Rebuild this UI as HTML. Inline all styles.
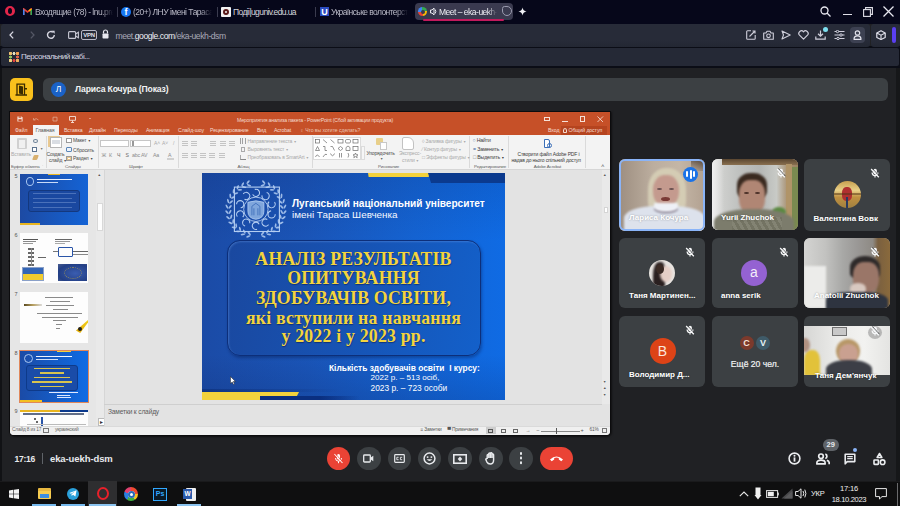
<!DOCTYPE html>
<html><head><meta charset="utf-8">
<style>
*{margin:0;padding:0;box-sizing:border-box}
html,body{width:900px;height:506px;overflow:hidden;background:#202124;font-family:"Liberation Sans",sans-serif}
.a{position:absolute}
svg{display:block}
#tabs{left:0;top:0;width:900px;height:24px;background:#06071a}
#addr{left:1px;top:24px;width:869px;height:23px;background:linear-gradient(#272b38 0 70%,#232733);border-radius:3px}
#ext{left:871px;top:24px;width:29px;height:23px;background:linear-gradient(#272b38 0 70%,#232733);border-radius:3px}
#bm{left:1px;top:48px;width:898px;height:18px;background:#252936;border-radius:2px}
#topbg{left:0;top:46px;width:900px;height:23px;background:#0b0d16}
#meet{left:0;top:68px;width:900px;height:413px;background:#202124}
#taskbar{left:0;top:481px;width:900px;height:25px;background:#0f0f10}
#ppt{left:10px;top:112px;width:600px;height:323px;background:#e6e6e6;border-radius:0 0 4px 4px;overflow:hidden;box-shadow:0 0 0 1px #0c0c0e,1px 1px 2px 1px rgba(0,0,0,0.5)}
.tt{font-size:8.5px;color:#b9b9c6;white-space:nowrap;overflow:hidden;line-height:12px;letter-spacing:-0.5px;-webkit-mask-image:linear-gradient(90deg,#000 85%,transparent)}
.pt{font-size:5.2px;line-height:8px;white-space:nowrap;color:#444;letter-spacing:-0.1px}
.rb{line-height:8px;white-space:nowrap;letter-spacing:-0.15px}
.ttl{left:0;width:303px;text-align:center;font-family:"Liberation Serif",serif;font-weight:bold;font-size:17.8px;line-height:20px;letter-spacing:0.2px;color:#f3d43e;white-space:nowrap;text-shadow:0.5px 0.5px 1px rgba(0,0,40,0.4)}
.nm{font-size:8px;font-weight:bold;line-height:12px;color:#fff;white-space:nowrap;text-shadow:0 0 2px rgba(0,0,0,0.35)}
.vid{filter:blur(1.2px)}
.tile{position:absolute;background:#3c4043;border-radius:6px;overflow:hidden}
</style></head><body>

<!-- TAB BAR -->
<div class="a" id="tabs">
 <div class="a" style="left:4.5px;top:5.8px;width:10.5px;height:10.5px;border-style:solid;border-color:#e3264a;border-width:2px 3px;border-radius:50%"></div>
 <div class="a" style="left:23px;top:8px;width:9px;height:7px">
  <svg width="9" height="7" viewBox="0 0 9 7"><path d="M0.7 7V1L4.5 4L8.3 1V7" fill="none" stroke="#ea4335" stroke-width="1.6"/><path d="M0.7 7V1.5" stroke="#4285f4" stroke-width="1.6"/><path d="M8.3 7V1.5" stroke="#34a853" stroke-width="1.6"/><path d="M6 3L8.3 1" stroke="#fbbc04" stroke-width="1.6"/></svg>
 </div>
 <div class="a tt" style="left:35px;top:6px;width:78px">Входящие (78) - lnu.pres</div>
 <div class="a" style="left:117px;top:7px;width:1px;height:10px;background:#3a3b4e"></div>
 <div class="a" style="left:121px;top:7px;width:10px;height:10px;border-radius:50%;background:#1877f2;color:#fff;font-size:9px;font-weight:bold;line-height:11px;text-align:center;overflow:hidden">f</div>
 <div class="a tt" style="left:133px;top:6px;width:79px">(20+) ЛНУ імені Тараса |</div>
 <div class="a" style="left:217px;top:7px;width:1px;height:10px;background:#3a3b4e"></div>
 <div class="a" style="left:221px;top:7px;width:10px;height:10px;background:#f2f2f2;border-radius:1px"><div class="a" style="left:2px;top:2px;width:6px;height:6px;border:2px solid #5a1a1a;border-radius:50%"></div></div>
 <div class="a tt" style="left:233px;top:6px;width:66px;color:#d6d6de;-webkit-mask-image:none;letter-spacing:-0.6px">Подіі|uguniv.edu.ua</div>
 <div class="a" style="left:315px;top:7px;width:1px;height:10px;background:#3a3b4e"></div>
 <div class="a" style="left:320px;top:7px;width:9px;height:9px;background:#2b4cc0;color:#fff;font-size:9px;font-weight:bold;line-height:10px;text-align:center">U</div>
 <div class="a tt" style="left:331px;top:6px;width:77px;letter-spacing:-0.6px">Українське волонтерсто</div>
 <div class="a" style="left:415px;top:3px;width:98px;height:17px;background:#3a3a4f;border-radius:4px"></div>
 <div class="a" style="left:418px;top:7px;width:9px;height:9px;border-radius:50%;background:conic-gradient(#34a853 0 25%,#fbbc04 0 50%,#ea4335 0 75%,#4285f4 0)"><div class="a" style="left:2.5px;top:2.5px;width:4px;height:4px;border-radius:50%;background:#3a3a4f"></div></div>
 <div class="a" style="left:430px;top:7px;width:7px;height:9px"><svg width="7" height="9" viewBox="0 0 7 9"><path d="M0.5 3H2L4 1V8L2 6H0.5Z" fill="none" stroke="#e8e8ef" stroke-width="1"/><path d="M5.2 2.5Q6.5 4.5 5.2 6.5" fill="none" stroke="#e8e8ef" stroke-width="1"/></svg></div>
 <div class="a tt" style="left:439px;top:6px;width:58px;color:#eeeef4">Meet – eka-uekh-</div>
 <div class="a" style="left:502px;top:6px;width:10px;height:10px;border:1.2px solid #9a9aae;border-radius:3px 6px 6px 6px"></div>
 <div class="a" style="left:423px;top:19px;width:81px;height:2px;background:#c21a5c;border-radius:1px"></div>
 <div class="a" style="left:518px;top:7px;width:9px;height:9px"><svg width="9" height="9" viewBox="0 0 9 9"><path d="M4.5 0.5Q5 4 8.5 4.5Q5 5 4.5 8.5Q4 5 0.5 4.5Q4 4 4.5 0.5Z" fill="#f0f0f5"/></svg></div>
 <div class="a" style="left:820px;top:6px;width:11px;height:11px"><svg width="11" height="11" viewBox="0 0 11 11"><circle cx="4.5" cy="4.5" r="3.5" fill="none" stroke="#e8e8f0" stroke-width="1.3"/><path d="M7 7L10.5 10.5" stroke="#e8e8f0" stroke-width="1.3"/></svg></div>
 <div class="a" style="left:843px;top:14px;width:9px;height:1px;background:#e0e0e8"></div>
 <div class="a" style="left:863px;top:7px;width:10px;height:10px"><svg width="10" height="10" viewBox="0 0 10 10"><rect x="0.6" y="2.6" width="6.8" height="6.8" fill="none" stroke="#e0e0e8" stroke-width="1.1"/><path d="M2.6 2.6V0.6H9.4V7.4H7.4" fill="none" stroke="#e0e0e8" stroke-width="1.1"/></svg></div>
 <div class="a" style="left:883px;top:6px;width:11px;height:11px"><svg width="11" height="11" viewBox="0 0 11 11"><path d="M0.5 0.5L10.5 10.5M10.5 0.5L0.5 10.5" stroke="#e8e8f0" stroke-width="1.3"/></svg></div>
</div>

<div class="a" id="topbg"></div>
<div class="a" id="addr">
 <div class="a" style="left:8px;top:7px"><svg width="5" height="8" viewBox="0 0 5 8"><path d="M4.2 0.6L1 4L4.2 7.4" fill="none" stroke="#d8d8e2" stroke-width="1.3"/></svg></div>
 <div class="a" style="left:29px;top:7px"><svg width="5" height="8" viewBox="0 0 5 8"><path d="M0.8 0.6L4 4L0.8 7.4" fill="none" stroke="#555866" stroke-width="1.3"/></svg></div>
 <div class="a" style="left:45px;top:6px"><svg width="10" height="10" viewBox="0 0 10 10"><path d="M8.3 5A3.4 3.4 0 1 1 7 2.2" fill="none" stroke="#d8d8e2" stroke-width="1.4"/><path d="M5.6 0.8H8.6V3.8Z" fill="#d8d8e2"/></svg></div>
 <div class="a" style="left:67px;top:7px"><svg width="11" height="8" viewBox="0 0 11 8"><rect x="0.6" y="0.6" width="7" height="6.8" rx="1" fill="none" stroke="#c8c8d4" stroke-width="1.1"/><path d="M7.6 3L10.4 1.2V6.8L7.6 5" fill="none" stroke="#c8c8d4" stroke-width="1.1"/></svg></div>
 <div class="a" style="left:80px;top:6px;width:16px;height:10px;border:1.2px solid #b8b8c6;border-radius:2px;font-size:6px;font-weight:bold;color:#e0e0ea;line-height:8px;text-align:center;letter-spacing:-0.2px">VPN</div>
 <div class="a" style="left:101px;top:5px"><svg width="7" height="10" viewBox="0 0 7 10"><path d="M1.5 4.5V3A2 2 0 0 1 5.5 3V4.5" fill="none" stroke="#e8e8f0" stroke-width="1.2"/><rect x="0.5" y="4.5" width="6" height="5" rx="0.8" fill="#e8e8f0"/></svg></div>
 <div class="a" style="left:114.5px;top:5.8px;font-size:8.6px;line-height:12px;color:#a8a8b6;letter-spacing:-0.45px;white-space:nowrap">meet.<span style="color:#eeeef5">google.com</span>/eka-uekh-dsm</div>

 <div class="a" style="left:745px;top:6px"><svg width="10" height="10" viewBox="0 0 10 10"><path d="M5 0.8H1.5A0.8 0.8 0 0 0 0.7 1.6V8.5A0.8 0.8 0 0 0 1.5 9.3H8.4A0.8 0.8 0 0 0 9.2 8.5V5" fill="none" stroke="#cfcfdb" stroke-width="1.1"/><path d="M3.5 6.5L9 1M6.5 1H9V3.5" fill="none" stroke="#cfcfdb" stroke-width="1.1"/></svg></div>
 <div class="a" style="left:762px;top:6px"><svg width="11" height="10" viewBox="0 0 11 10"><path d="M0.7 3H3L4 1.2H7L8 3H10.3V9.2H0.7Z" fill="none" stroke="#cfcfdb" stroke-width="1.1" stroke-linejoin="round"/><circle cx="5.5" cy="5.8" r="1.8" fill="none" stroke="#cfcfdb" stroke-width="1.1"/></svg></div>
 <div class="a" style="left:780px;top:6px"><svg width="10" height="10" viewBox="0 0 10 10"><path d="M1 1L9.2 5L1 9L2.5 5Z" fill="none" stroke="#cfcfdb" stroke-width="1.1" stroke-linejoin="round"/></svg></div>
 <div class="a" style="left:797px;top:6px"><svg width="11" height="10" viewBox="0 0 11 10"><path d="M5.5 9.2L1.5 5.2A2.4 2.4 0 0 1 5.5 1.8A2.4 2.4 0 0 1 9.5 5.2Z" fill="none" stroke="#cfcfdb" stroke-width="1.2" stroke-linejoin="round"/></svg></div>
 <div class="a" style="left:814px;top:6px"><svg width="11" height="10" viewBox="0 0 11 10"><path d="M5.5 0.5V6M3 3.8L5.5 6.2L8 3.8M0.8 6.5V9.2H10.2V6.5" fill="none" stroke="#cfcfdb" stroke-width="1.2"/></svg></div>
 <div class="a" style="left:822px;top:3px;width:5px;height:5px;border-radius:50%;background:#7ee0f0"></div>
 <div class="a" style="left:833px;top:6px"><svg width="11" height="10" viewBox="0 0 11 10"><path d="M0.5 1.5H10.5M0.5 5H10.5M0.5 8.5H10.5" stroke="#cfcfdb" stroke-width="1.1"/><circle cx="3.5" cy="1.5" r="1.2" fill="#262a37" stroke="#cfcfdb" stroke-width="1"/><circle cx="7" cy="5" r="1.2" fill="#262a37" stroke="#cfcfdb" stroke-width="1"/><circle cx="4" cy="8.5" r="1.2" fill="#262a37" stroke="#cfcfdb" stroke-width="1"/></svg></div>
 <div class="a" style="left:849px;top:3px;width:15px;height:16px;border-radius:4px;background:#3d4152"></div>
 <div class="a" style="left:852px;top:6px"><svg width="9" height="10" viewBox="0 0 9 10"><circle cx="4.5" cy="3" r="2.2" fill="none" stroke="#e4e4ee" stroke-width="1.2"/><path d="M1 9.3Q1 5.8 4.5 5.8Q8 5.8 8 9.3Z" fill="none" stroke="#e4e4ee" stroke-width="1.2" stroke-linejoin="round"/></svg></div>
</div>
<div class="a" id="ext">
 <div class="a" style="left:5px;top:6px"><svg width="10" height="10" viewBox="0 0 10 10"><path d="M5 0.7L9.2 3V7.5L5 9.5L0.8 7.5V3Z" fill="none" stroke="#e0e0ea" stroke-width="1.2" stroke-linejoin="round"/><path d="M0.8 3L5 5.2L9.2 3M5 5.2V9.5" fill="none" stroke="#e0e0ea" stroke-width="1.1"/></svg></div>
 <div class="a" style="left:21px;top:3px;width:4px;height:16px;border-radius:2px;background:#5a3ff0"></div>
</div>
<div class="a" id="bm">
 <div class="a" style="left:8px;top:4px;width:10px;height:10px;background:
   radial-gradient(circle at 1.5px 1.5px,#f0c070 1.4px,transparent 1.6px),
   radial-gradient(circle at 5px 1.5px,#e0e0c0 1.4px,transparent 1.6px),
   radial-gradient(circle at 8.5px 1.5px,#f5a050 1.4px,transparent 1.6px),
   radial-gradient(circle at 1.5px 5px,#90c060 1.4px,transparent 1.6px),
   radial-gradient(circle at 8.5px 5px,#e06050 1.4px,transparent 1.6px),
   radial-gradient(circle at 1.5px 8.5px,#f0d080 1.4px,transparent 1.6px),
   radial-gradient(circle at 5px 8.5px,#e04040 1.4px,transparent 1.6px),
   radial-gradient(circle at 8.5px 8.5px,#f0b060 1.4px,transparent 1.6px)"></div>
 <div class="a" style="left:20px;top:3px;font-size:8px;line-height:11px;color:#d8d8e2;letter-spacing:-0.45px;white-space:nowrap">Персональний кабі...</div>
</div>
<div class="a" id="meet">
 <div class="a" style="left:0;top:0;width:2px;height:413px;background:#111215"></div>
 <div class="a" style="left:896px;top:0;width:4px;height:413px;background:#161719"></div>
 <div class="a" style="left:10px;top:10px;width:23px;height:23px;border-radius:5px;background:#f9c01c"></div>
 <div class="a" style="left:15px;top:15px"><svg width="13" height="13" viewBox="0 0 13 13"><path d="M2 12V1.2H9.5V12M0.5 12H12" fill="none" stroke="#3a2a00" stroke-width="1.3"/><path d="M4 2.5L8 3.5V11.5L4 10.5Z" fill="#3a2a00"/><rect x="10" y="5" width="2" height="1.5" fill="#3a2a00"/></svg></div>
 <div class="a" style="left:43px;top:10px;width:845px;height:23px;border-radius:6px;background:#3c4043"></div>
 <div class="a" style="left:51px;top:14px;width:15px;height:15px;border-radius:50%;background:#1a62c7;color:#fff;font-size:8.5px;line-height:15px;text-align:center">Л</div>
 <div class="a" style="left:75px;top:15px;font-size:8.6px;line-height:13px;color:#f1f3f4;font-weight:bold;white-space:nowrap;letter-spacing:-0.15px">Лариса Кочура (Показ)</div>
</div>
<div class="a" id="ppt">
 <div class="a" style="left:0;top:0;width:600px;height:23px;background:#c65028"></div>
 <!-- quick access -->
 <div class="a" style="left:6.5px;top:4px"><svg width="6" height="6" viewBox="0 0 6 6"><path d="M0.4 0.4H4.6L5.6 1.4V5.6H0.4Z" fill="#f6e1d8"/><rect x="1.4" y="3.2" width="3.2" height="2" fill="#c65028"/><rect x="1.6" y="0.4" width="2.6" height="1.3" fill="#c65028"/></svg></div>
 <div class="a" style="left:23px;top:4.5px"><svg width="6" height="5" viewBox="0 0 6 5"><path d="M1.2 2.5Q3 0.5 5.5 3" fill="none" stroke="#e0a890" stroke-width="0.8"/><path d="M0.4 1V3H2.4" fill="none" stroke="#e0a890" stroke-width="0.8"/></svg></div>
 <div class="a" style="left:42px;top:4px"><svg width="6" height="6" viewBox="0 0 6 6"><path d="M1 1.2H5V5H1Z" fill="none" stroke="#e0a890" stroke-width="0.8"/></svg></div>
 <div class="a" style="left:59px;top:3.5px"><svg width="7" height="7" viewBox="0 0 7 7"><path d="M0.5 0.5H6.5V4.3H0.5Z" fill="none" stroke="#f6e1d8" stroke-width="0.9"/><path d="M3.5 4.3V6.5M2 6.5H5" stroke="#f6e1d8" stroke-width="0.9"/></svg></div>
 <div class="a" style="left:79px;top:6px;width:0;height:0;border-left:1.5px solid transparent;border-right:1.5px solid transparent;border-top:1.8px solid #f6e1d8"></div>
 <div class="a pt" style="left:227px;top:3.5px;font-size:5.2px;letter-spacing:-0.2px;color:#f3d8cc">Мероприятия анализа пакета - PowerPoint (Сбой активации продукта)</div>
 <div class="a" style="left:534px;top:4.5px;width:6px;height:4.5px;border:0.8px solid #f6e1d8;border-top-width:1.5px"></div>
 <div class="a" style="left:552px;top:8.5px;width:6px;height:0.8px;background:#f6e1d8"></div>
 <div class="a" style="left:569.5px;top:4px;width:5.5px;height:5.5px;border:0.8px solid #f6e1d8"></div>
 <div class="a" style="left:587px;top:3.5px"><svg width="6.5" height="6.5" viewBox="0 0 7 7"><path d="M0.5 0.5L6.5 6.5M6.5 0.5L0.5 6.5" stroke="#f6e1d8" stroke-width="0.9"/></svg></div>
 <!-- tabs -->
 <div class="a" style="left:23px;top:13px;width:26px;height:10px;background:#f3f3f3"></div>
 <div class="a pt" style="left:5px;top:14px;color:#f6ddd2">Файл</div>
 <div class="a pt" style="left:25.5px;top:14px;color:#555">Главная</div>
 <div class="a pt" style="left:54px;top:14px;color:#f6ddd2">Вставка</div>
 <div class="a pt" style="left:79px;top:14px;color:#f6ddd2">Дизайн</div>
 <div class="a pt" style="left:104px;top:14px;color:#f6ddd2">Переходы</div>
 <div class="a pt" style="left:136px;top:14px;color:#f6ddd2">Анимация</div>
 <div class="a pt" style="left:168px;top:14px;color:#f6ddd2">Слайд-шоу</div>
 <div class="a pt" style="left:200px;top:14px;color:#f6ddd2">Рецензирование</div>
 <div class="a pt" style="left:247px;top:14px;color:#f6ddd2">Вид</div>
 <div class="a pt" style="left:264px;top:14px;color:#f6ddd2">Acrobat</div>
 <div class="a pt" style="left:290px;top:14px;color:#ecc4b2">♀ Что вы хотите сделать?</div>
 <div class="a pt" style="left:538px;top:14px;color:#f6ddd2">Вход</div>
 <div class="a" style="left:551px;top:14px;width:46px;height:9px;background:#b5441f"></div>
 <div class="a pt" style="left:553px;top:14px;color:#f6ddd2"><span style="display:inline-block;width:4px;height:5px;border:0.7px solid #f6ddd2;border-radius:50% 50% 1px 1px;vertical-align:-0.5px;margin-right:1.5px"></span>Общий доступ</div>
 <!-- ribbon -->
 <div class="a" style="left:0;top:23px;width:600px;height:35px;background:#f3f3f3;border-bottom:1px solid #d6d6d6"></div>
 <div class="a" style="left:35.5px;top:24.0px;width:0.8px;height:32.0px;background:#dadada;"></div>
<div class="a" style="left:87.8px;top:24.0px;width:0.8px;height:32.0px;background:#dadada;"></div>
<div class="a" style="left:167.8px;top:24.0px;width:0.8px;height:32.0px;background:#dadada;"></div>
<div class="a" style="left:301.7px;top:24.0px;width:0.8px;height:32.0px;background:#dadada;"></div>
<div class="a" style="left:459.3px;top:24.0px;width:0.8px;height:32.0px;background:#dadada;"></div>
<div class="a" style="left:498.0px;top:24.0px;width:0.8px;height:32.0px;background:#dadada;"></div>
<div class="a" style="left:574.9px;top:24.0px;width:0.8px;height:32.0px;background:#dadada;"></div>
<div class="a rb" style="left:1.0px;top:51.0px;color:#5f5f5f;font-size:4.4px;letter-spacing:-0.1px;">Буфер обмена</div>
<div class="a rb" style="left:55.0px;top:51.0px;color:#5f5f5f;font-size:4.4px;letter-spacing:-0.1px;">Слайды</div>
<div class="a rb" style="left:119.0px;top:51.0px;color:#5f5f5f;font-size:4.4px;letter-spacing:-0.1px;">Шрифт</div>
<div class="a rb" style="left:227.5px;top:51.0px;color:#5f5f5f;font-size:4.4px;letter-spacing:-0.1px;">Абзац</div>
<div class="a rb" style="left:368.0px;top:51.0px;color:#5f5f5f;font-size:4.4px;letter-spacing:-0.1px;">Рисование</div>
<div class="a rb" style="left:464.0px;top:51.0px;color:#5f5f5f;font-size:4.4px;letter-spacing:-0.1px;">Редактирование</div>
<div class="a rb" style="left:523.7px;top:51.0px;color:#5f5f5f;font-size:4.4px;letter-spacing:-0.1px;">Adobe Acrobat</div>
<div class="a" style="left:7.0px;top:25.5px;width:10.0px;height:11.5px;background:#d0d0d0;border-radius:1px"></div>
<div class="a" style="left:9.0px;top:28.0px;width:6.0px;height:8.0px;background:#f0f0f0;"></div>
<div class="a rb" style="left:1.0px;top:37.7px;color:#a9a9a9;font-size:5px;">Вставить</div>
<div class="a" style="left:23.0px;top:27.0px;width:5.0px;height:4.0px;background:transparent;border:1px solid #6a7f95;border-radius:50%"></div>
<div class="a" style="left:22.0px;top:35.0px;width:5.0px;height:5.0px;background:#fff;border:1px solid #5f7590"></div>
<div class="a rb" style="left:30.0px;top:33.0px;color:#777;font-size:4px;"><span style="font-size:3.3px;vertical-align:middle">▼</span></div>
<div class="a" style="left:23.0px;top:43.0px;width:5.0px;height:5.0px;background:#d8b070;transform:skew(-20deg);border-radius:1px"></div>
<div class="a rb" style="left:32.0px;top:50.0px;color:#777;font-size:4px;">·</div>
<div class="a" style="left:40.0px;top:24.5px;width:12.0px;height:11.0px;background:#fff;border:1px solid #b5b5b5;box-shadow:-2px -1px 0 #e8c890"></div>
<div class="a" style="left:42.0px;top:28.0px;width:8.0px;height:4.0px;background:#d9dde3;"></div>
<div class="a rb" style="left:36.5px;top:37.7px;color:#4a4a4a;font-size:5px;">Создать</div>
<div class="a rb" style="left:39.0px;top:43.8px;color:#4a4a4a;font-size:5px;">слайд <span style="font-size:3.3px;vertical-align:middle">▼</span></div>
<div class="a" style="left:56.0px;top:25.5px;width:6.0px;height:5.5px;background:#fff;border:1px solid #9a9a9a"></div>
<div class="a rb" style="left:63.0px;top:24.3px;color:#4a4a4a;font-size:5px;">Макет <span style="font-size:3.3px;vertical-align:middle">▼</span></div>
<div class="a" style="left:56.0px;top:34.5px;width:6.0px;height:5.5px;background:#eef3f9;border:1px solid #5a86b8;border-radius:1px"></div>
<div class="a rb" style="left:63.0px;top:33.5px;color:#4a4a4a;font-size:5px;">Сбросить</div>
<div class="a" style="left:56.0px;top:43.5px;width:6.0px;height:5.5px;background:#fff;border:1px solid #9a9a9a;box-shadow:inset 0 0 0 1px #e8c890"></div>
<div class="a rb" style="left:63.0px;top:42.0px;color:#4a4a4a;font-size:5px;">Раздел <span style="font-size:3.3px;vertical-align:middle">▼</span></div>
<div class="a" style="left:90.0px;top:27.5px;width:29.0px;height:7.5px;background:#fff;border:1px solid #c6c6c6"></div>
<div class="a" style="left:120.0px;top:27.5px;width:21.0px;height:7.5px;background:#fff;border:1px solid #c6c6c6"></div>
<div class="a" style="left:122.0px;top:28.5px;width:2.0px;height:5.5px;background:#fff;border-left:1px solid #999;border-right:1px solid #999"></div>
<div class="a rb" style="left:144.0px;top:27.3px;color:#a9a9a9;font-size:5px;">A˄</div>
<div class="a rb" style="left:152.0px;top:27.3px;color:#a9a9a9;font-size:5px;">A˅</div>
<div class="a rb" style="left:163.0px;top:27.3px;color:#a9a9a9;font-size:5px;">/</div>
<div class="a rb" style="left:91.5px;top:39.3px;color:#8a8a8a;font-size:5.2px;">Ж</div>
<div class="a rb" style="left:99.0px;top:39.3px;color:#8a8a8a;font-size:5.2px;">К</div>
<div class="a rb" style="left:107.0px;top:39.3px;color:#6a6a6a;font-size:5.2px;">Ч</div>
<div class="a rb" style="left:115.5px;top:39.3px;color:#6a6a6a;font-size:5.2px;">S</div>
<div class="a rb" style="left:122.0px;top:39.3px;color:#8a8a8a;font-size:5.2px;">abc</div>
<div class="a rb" style="left:131.0px;top:39.3px;color:#8a8a8a;font-size:5.2px;">AV</div>
<div class="a rb" style="left:143.0px;top:39.3px;color:#8a8a8a;font-size:5.2px;">Aa</div>
<div class="a rb" style="left:158.0px;top:39.3px;color:#8a8a8a;font-size:5.2px;">A</div>
<div class="a" style="left:157.0px;top:46.0px;width:7.0px;height:1.5px;background:#d0d0d0;"></div>
<div class="a" style="left:172.0px;top:28.5px;width:6.0px;height:5.5px;background:repeating-linear-gradient(#c4c4c4 0 1px,transparent 1px 2.2px);"></div>
<div class="a" style="left:181.0px;top:28.5px;width:6.0px;height:5.5px;background:repeating-linear-gradient(#c4c4c4 0 1px,transparent 1px 2.2px);"></div>
<div class="a" style="left:200.0px;top:28.5px;width:6.0px;height:5.5px;background:repeating-linear-gradient(#c4c4c4 0 1px,transparent 1px 2.2px);"></div>
<div class="a" style="left:209.5px;top:28.5px;width:6.0px;height:5.5px;background:repeating-linear-gradient(#c4c4c4 0 1px,transparent 1px 2.2px);"></div>
<div class="a" style="left:219.0px;top:28.5px;width:6.0px;height:5.5px;background:repeating-linear-gradient(#c4c4c4 0 1px,transparent 1px 2.2px);"></div>
<div class="a" style="left:172.0px;top:40.5px;width:6.0px;height:5.5px;background:repeating-linear-gradient(#c4c4c4 0 1px,transparent 1px 2.2px);"></div>
<div class="a" style="left:181.0px;top:40.5px;width:6.0px;height:5.5px;background:repeating-linear-gradient(#c4c4c4 0 1px,transparent 1px 2.2px);"></div>
<div class="a" style="left:190.0px;top:40.5px;width:6.0px;height:5.5px;background:repeating-linear-gradient(#c4c4c4 0 1px,transparent 1px 2.2px);"></div>
<div class="a" style="left:199.0px;top:40.5px;width:6.0px;height:5.5px;background:repeating-linear-gradient(#c4c4c4 0 1px,transparent 1px 2.2px);"></div>
<div class="a" style="left:209.0px;top:40.5px;width:6.0px;height:5.5px;background:repeating-linear-gradient(#c4c4c4 0 1px,transparent 1px 2.2px);"></div>
<div class="a" style="left:230.0px;top:25.5px;width:6.0px;height:6.0px;background:repeating-linear-gradient(90deg,#a0a0a0 0 1px,transparent 1px 2.5px);"></div>
<div class="a rb" style="left:237.5px;top:24.7px;color:#a9a9a9;font-size:5px;">Направление текста <span style="font-size:3.3px;vertical-align:middle">▼</span></div>
<div class="a" style="left:231.0px;top:34.5px;width:4.0px;height:5.5px;background:transparent;border:1px solid #aaa"></div>
<div class="a rb" style="left:237.5px;top:33.3px;color:#a9a9a9;font-size:5px;">Выровнять текст <span style="font-size:3.3px;vertical-align:middle">▼</span></div>
<div class="a" style="left:230.0px;top:42.5px;width:6.0px;height:5.5px;background:transparent;border-bottom:1px solid #888;border-left:1px solid #aaa"></div>
<div class="a rb" style="left:237.5px;top:41.3px;color:#a9a9a9;font-size:5px;">Преобразовать в SmartArt <span style="font-size:3.3px;vertical-align:middle">▼</span></div>
<div class="a" style="left:303.0px;top:25.0px;width:48.0px;height:23.0px;background:#fff;border:1px solid #dcdcdc"></div>
<svg class="a" style="left:304px;top:26px" width="46" height="21" viewBox="0 0 46 21" fill="none" stroke="#6a6a6a" stroke-width="0.7"><rect x="1.5" y="1.5" width="4" height="3.5"/><path d="M9 1.5L13 5M16.5 1.5L20.5 5"/><rect x="24" y="1.5" width="5" height="3.5"/><rect x="31.5" y="1.5" width="5" height="3.5" rx="1.2"/><rect x="39" y="1.5" width="5" height="3.5"/><path d="M1.5 12.5L3.5 8.5L5.5 12.5Z"/><path d="M9 8.5H11V12.5H13M16.5 8.5H18.5L20.5 12.5"/><path d="M24 10.5L26.5 8.5L29 10.5L26.5 12.5Z"/><path d="M32 12.5V9.5L34 8L36 9.5V12.5Z"/><rect x="39" y="8.5" width="5" height="4"/><path d="M1.5 19Q3 15 5.5 19M9 19Q11 15 13 16.5M16.5 15.5Q18.5 20 20.5 15.5M25.5 15V19.5M27.5 15V19.5M34 15Q35.5 17 34 19.5"/><path d="M41.5 15L42.3 16.8H44L42.7 17.9L43.2 19.7L41.5 18.6L39.8 19.7L40.3 17.9L39 16.8H40.7Z"/></svg>
<div class="a" style="left:351.0px;top:34.0px;width:4.0px;height:14.0px;background:#f6f6f6;border:1px solid #dcdcdc"></div>
<div class="a" style="left:366.0px;top:25.5px;width:7.0px;height:7.5px;background:#e8cf8a;border-radius:1px"></div>
<div class="a" style="left:370.0px;top:30.0px;width:7.0px;height:7.5px;background:#fff;border:1px solid #c8c8c8"></div>
<div class="a rb" style="left:356.5px;top:37.3px;color:#4a4a4a;font-size:5px;">Упорядочить</div>
<div class="a rb" style="left:370.0px;top:43.3px;color:#666;font-size:4px;"><span style="font-size:3.3px;vertical-align:middle">▼</span></div>
<div class="a" style="left:392.0px;top:25.0px;width:12.0px;height:13.0px;background:#fff;border:1px solid #c2c2c2;border-radius:2px 6px 2px 2px"></div>
<div class="a rb" style="left:389.0px;top:37.3px;color:#a9a9a9;font-size:5px;">Экспресс-</div>
<div class="a rb" style="left:392.0px;top:43.8px;color:#a9a9a9;font-size:5px;">стили <span style="font-size:3.3px;vertical-align:middle">▼</span></div>
<div class="a rb" style="left:412.0px;top:24.7px;color:#a9a9a9;font-size:5px;">◊ Заливка фигуры <span style="font-size:3.3px;vertical-align:middle">▼</span></div>
<div class="a rb" style="left:412.0px;top:32.7px;color:#a9a9a9;font-size:5px;">⁄ Контур фигуры <span style="font-size:3.3px;vertical-align:middle">▼</span></div>
<div class="a rb" style="left:412.0px;top:41.3px;color:#a9a9a9;font-size:5px;">□ Эффекты фигуры <span style="font-size:3.3px;vertical-align:middle">▼</span></div>
<div class="a rb" style="left:462.5px;top:24.3px;color:#3c3c3c;font-size:5.2px;"><b style="color:#2a5a9a">○</b> Найти</div>
<div class="a rb" style="left:463.0px;top:32.7px;color:#3c3c3c;font-size:5.2px;"><span style="color:#2a5a9a">=</span> Заменить <span style="font-size:3.3px;vertical-align:middle">▼</span></div>
<div class="a rb" style="left:463.0px;top:40.7px;color:#3c3c3c;font-size:5.2px;"><span style="color:#777">□</span> Выделить <span style="font-size:3.3px;vertical-align:middle">▼</span></div>
<div class="a" style="left:534.0px;top:27.0px;width:6.0px;height:9.0px;background:#fff;border:1px solid #3b6fb8;border-radius:0 2px 0 0"></div>
<div class="a" style="left:537.0px;top:31.0px;width:5.0px;height:5.0px;background:transparent;border:1px solid #3b6fb8;border-radius:50%"></div>
<div class="a rb" style="left:507.5px;top:37.6px;color:#3a3a3a;font-size:5px;">Створити файл Adobe PDF і</div>
<div class="a rb" style="left:501.5px;top:43.8px;color:#3a3a3a;font-size:5px;">надав до нього спільний доступ</div>
<div class="a rb" style="left:591.0px;top:49.8px;color:#555;font-size:6px;">˄</div>
 <!-- workspace -->
 <div class="a" style="left:0;top:58px;width:600px;height:256px;background:#e3e3e3"></div>
 <div class="a" style="left:0.0px;top:58.0px;width:86.0px;height:256.0px;background:#e6e6e6;"></div>
<div class="a" style="left:86.0px;top:58.0px;width:8.0px;height:256.0px;background:#e9e9e9;"></div>
<div class="a" style="left:87.0px;top:91.0px;width:5.5px;height:28.0px;background:#fdfdfd;border:1px solid #d8d8d8"></div>
<div class="a rb" style="left:87.5px;top:58.0px;color:#555;font-size:5px;"><span style="font-size:3.6px">▲</span></div>
<div class="a rb" style="left:88.0px;top:306.0px;color:#333;font-size:5px;background:#fff;border:0.5px solid #bbb;line-height:6px;">►</div>
<div class="a rb" style="left:4.5px;top:60.0px;color:#555;font-size:5.5px;">5</div>
<div class="a rb" style="left:4.5px;top:119.0px;color:#555;font-size:5.5px;">6</div>
<div class="a rb" style="left:4.5px;top:178.0px;color:#555;font-size:5.5px;">7</div>
<div class="a rb" style="left:4.5px;top:236.5px;color:#555;font-size:5.5px;">8</div>
<div class="a rb" style="left:4.5px;top:295.0px;color:#555;font-size:5.5px;">9</div>
<div class="a" style="left:10.2px;top:62.4px;width:67.8px;height:50.4px;background:linear-gradient(90deg,#1d4aa3,#1463d5);"></div>
<div class="a" style="left:16.0px;top:65.0px;width:8.0px;height:9.0px;background:transparent;border:1px solid #a9c6f0;border-radius:50%"></div>
<div class="a" style="left:27.0px;top:66.5px;width:35.0px;height:1.5px;background:#e8f0ff;"></div>
<div class="a" style="left:27.0px;top:69.5px;width:21.0px;height:1.0px;background:#c8daf8;"></div>
<div class="a" style="left:18.0px;top:78.0px;width:52.0px;height:22.0px;background:#1a48a0;border:1px solid #14387e;border-radius:3px"></div>
<div class="a" style="left:23.0px;top:81.0px;width:43.0px;height:1.0px;background:rgba(200,220,255,0.28);"></div>
<div class="a" style="left:23.0px;top:85.5px;width:39.0px;height:1.0px;background:rgba(200,220,255,0.28);"></div>
<div class="a" style="left:23.0px;top:90.0px;width:43.0px;height:1.0px;background:rgba(200,220,255,0.28);"></div>
<div class="a" style="left:23.0px;top:94.5px;width:39.0px;height:1.0px;background:rgba(200,220,255,0.28);"></div>
<div class="a" style="left:10.2px;top:110.5px;width:19.8px;height:2.3px;background:#e9b520;"></div>
<div class="a" style="left:38.0px;top:62.4px;width:12.0px;height:1.0px;background:#e9b520;"></div>
<div class="a" style="left:10.4px;top:121.2px;width:67.4px;height:50.3px;background:#fdfdfd;"></div>
<div class="a" style="left:13.0px;top:127.0px;width:15.0px;height:1.0px;background:#555;"></div>
<div class="a" style="left:13.0px;top:129.0px;width:13.0px;height:1.0px;background:#888;"></div>
<div class="a" style="left:13.0px;top:131.0px;width:10.0px;height:1.0px;background:#999;"></div>
<div class="a" style="left:45.0px;top:127.0px;width:17.0px;height:1.0px;background:#666;"></div>
<div class="a" style="left:45.0px;top:129.0px;width:15.0px;height:1.0px;background:#999;"></div>
<div class="a" style="left:45.0px;top:131.0px;width:10.0px;height:1.0px;background:#aaa;"></div>
<div class="a" style="left:18.0px;top:136.0px;width:6.0px;height:1.5px;background:#666;"></div>
<div class="a" style="left:18.0px;top:140.0px;width:6.0px;height:1.5px;background:#666;"></div>
<div class="a" style="left:18.0px;top:144.0px;width:6.0px;height:1.5px;background:#666;"></div>
<div class="a" style="left:18.0px;top:148.0px;width:6.0px;height:1.5px;background:#666;"></div>
<div class="a" style="left:18.0px;top:152.0px;width:6.0px;height:1.5px;background:#666;"></div>
<div class="a" style="left:21.0px;top:136.0px;width:1.0px;height:18.0px;background:#888;"></div>
<div class="a" style="left:28.0px;top:145.0px;width:8.0px;height:1.0px;background:#666;"></div>
<div class="a" style="left:48.0px;top:135.0px;width:15.0px;height:10.0px;background:transparent;border:1.2px solid #2a55a8;border-radius:1px"></div>
<div class="a" style="left:63.0px;top:139.0px;width:15.0px;height:1.0px;background:#666;"></div>
<div class="a" style="left:63.0px;top:142.0px;width:15.0px;height:1.0px;background:#888;"></div>
<div class="a" style="left:43.0px;top:139.0px;width:5.0px;height:1.0px;background:#777;"></div>
<div class="a" style="left:11.9px;top:155.2px;width:21.9px;height:13.8px;background:linear-gradient(#3365b5 0 48%,#f0cb2e 48%);border:1px solid #8aa0c8"></div>
<div class="a" style="left:48.2px;top:152.3px;width:28.8px;height:17.0px;background:radial-gradient(ellipse at 60% 55%,#3a5db0,#233f85 70%,#4a5e90);"></div>
<div class="a" style="left:54.0px;top:155.0px;width:18.0px;height:12.0px;background:transparent;border:1px dotted #c8b040;border-radius:50%;opacity:0.6"></div>
<div class="a" style="left:10.4px;top:179.7px;width:67.6px;height:51.1px;background:#fdfdfd;"></div>
<div class="a" style="left:35.0px;top:185.0px;width:28.0px;height:1.0px;background:#8a8a8a;"></div>
<div class="a" style="left:40.0px;top:188.9px;width:20.0px;height:1.0px;background:#8a8a8a;"></div>
<div class="a" style="left:36.0px;top:192.8px;width:28.0px;height:1.0px;background:#8a8a8a;"></div>
<div class="a" style="left:43.0px;top:196.7px;width:15.0px;height:1.0px;background:#8a8a8a;"></div>
<div class="a" style="left:27.0px;top:200.6px;width:45.0px;height:1.0px;background:#8a8a8a;"></div>
<div class="a" style="left:32.0px;top:204.5px;width:36.0px;height:1.0px;background:#8a8a8a;"></div>
<div class="a" style="left:43.0px;top:208.4px;width:13.0px;height:1.0px;background:#8a8a8a;"></div>
<div class="a" style="left:46.0px;top:212.3px;width:6.0px;height:1.0px;background:#8a8a8a;"></div>
<div class="a" style="left:46.0px;top:216.2px;width:4.0px;height:1.0px;background:#8a8a8a;"></div>
<div class="a" style="left:14.0px;top:192.0px;width:18.0px;height:2.0px;background:linear-gradient(90deg,#5a4a20,#b8a060,#ddd);"></div>
<div class="a" style="left:66.0px;top:208.0px;width:12.0px;height:13.0px;background:linear-gradient(225deg,#f2d020,#e0a800);clip-path:polygon(100% 0,100% 20%,35% 100%,0 80%);"></div>
<div class="a" style="left:68.0px;top:215.0px;width:4.0px;height:4.0px;background:#222;border-radius:50%"></div>
<div class="a" style="left:9.3px;top:238.2px;width:69.8px;height:52.6px;background:#e0875a;"></div>
<div class="a" style="left:10.0px;top:239.0px;width:68.4px;height:51.2px;background:linear-gradient(90deg,#1b4ba6,#0f6be4);"></div>
<div class="a" style="left:47.0px;top:239.0px;width:14.0px;height:1.0px;background:#f3d23c;"></div>
<div class="a" style="left:14.0px;top:242.0px;width:9.0px;height:9.0px;background:transparent;border:1px solid #a9c6f0;border-radius:50%"></div>
<div class="a" style="left:26.0px;top:244.0px;width:36.0px;height:1.3px;background:#f0f4ff;"></div>
<div class="a" style="left:26.0px;top:246.5px;width:22.0px;height:1.0px;background:#d0e0fa;"></div>
<div class="a" style="left:16.0px;top:252.5px;width:52.0px;height:26.5px;background:#1a4ca8;border:0.6px solid #0e3a8a;border-radius:3px"></div>
<div class="a" style="left:24.0px;top:255.5px;width:36.0px;height:1.8px;background:#d8c450;"></div>
<div class="a" style="left:30.0px;top:260.0px;width:24.0px;height:1.8px;background:#d8c450;"></div>
<div class="a" style="left:24.0px;top:264.5px;width:36.0px;height:1.8px;background:#d8c450;"></div>
<div class="a" style="left:22.0px;top:269.0px;width:40.0px;height:1.8px;background:#d8c450;"></div>
<div class="a" style="left:30.0px;top:273.5px;width:24.0px;height:1.8px;background:#d8c450;"></div>
<div class="a" style="left:39.0px;top:280.0px;width:29.0px;height:1.2px;background:#dfe8ff;"></div>
<div class="a" style="left:47.0px;top:282.5px;width:13.0px;height:1.0px;background:#dfe8ff;"></div>
<div class="a" style="left:47.0px;top:285.0px;width:14.0px;height:1.0px;background:#dfe8ff;"></div>
<div class="a" style="left:10.0px;top:288.0px;width:22.0px;height:2.2px;background:#f3c020;"></div>
<div class="a" style="left:10.4px;top:298.0px;width:67.6px;height:16.0px;background:#fdfdfd;"></div>
<div class="a" style="left:10.4px;top:298.0px;width:39.6px;height:1.5px;background:#e9b520;"></div>
<div class="a" style="left:50.0px;top:298.0px;width:28.0px;height:1.5px;background:#0b3a8e;"></div>
<div class="a" style="left:13.0px;top:301.0px;width:61.0px;height:2.0px;background:#3a4a6a;opacity:0.8"></div>
<div class="a" style="left:31.0px;top:305.0px;width:1.5px;height:9.0px;background:#2a55a8;"></div>
<div class="a" style="left:24.0px;top:306.0px;width:2.0px;height:2.0px;background:#666;"></div>
<div class="a" style="left:26.0px;top:309.0px;width:2.0px;height:2.0px;background:#666;"></div>
<div class="a" style="left:17.0px;top:312.0px;width:59.0px;height:0.5px;background:#bbb;"></div>
<div class="a" style="left:94.0px;top:58.0px;width:0.8px;height:256.0px;background:#d6d6d6;"></div>
<div class="a" style="left:592.0px;top:58.0px;width:8.0px;height:234.0px;background:#e9e9e9;"></div>
<div class="a rb" style="left:593.0px;top:58.0px;color:#555;font-size:5px;"><span style="font-size:3.6px">▲</span></div>
<div class="a" style="left:593.5px;top:95.0px;width:4.5px;height:6.0px;background:#fff;border:1px solid #d5d5d5"></div>
<div class="a rb" style="left:593.0px;top:265.0px;color:#555;font-size:5px;"><span style="font-size:3.3px;vertical-align:middle">▼</span></div>
<div class="a rb" style="left:593.0px;top:271.3px;color:#555;font-size:5px;"><span style="font-size:3.6px">▲</span></div>
<div class="a rb" style="left:593.0px;top:278.0px;color:#555;font-size:5px;"><span style="font-size:3.3px;vertical-align:middle">▼</span></div>
<div class="a" style="left:94.0px;top:291.5px;width:498.0px;height:1.0px;background:#cfcfcf;"></div>
<div class="a rb" style="left:98.0px;top:295.5px;color:#5a5a5a;font-size:6.6px;">Заметки к слайду</div>
<div class="a" style="left:0.0px;top:314.0px;width:600.0px;height:9.0px;background:#f0f0f0;border-top:1px solid #dadada"></div>
<div class="a rb" style="left:2.0px;top:314.3px;color:#666;font-size:4.8px;">Слайд 8 из 17</div>
<div class="a" style="left:33.0px;top:316.0px;width:6.0px;height:4.5px;background:transparent;border:0.8px solid #777"></div>
<div class="a rb" style="left:45.0px;top:314.3px;color:#666;font-size:4.8px;">украинский</div>
<div class="a rb" style="left:410.5px;top:314.3px;color:#555;font-size:4.8px;">≡ Заметки</div>
<div class="a rb" style="left:437.5px;top:314.3px;color:#555;font-size:4.8px;">▀ Примечания</div>
<div class="a" style="left:475.5px;top:315.0px;width:10.0px;height:7.0px;background:#cdcdcd;"></div>
<div class="a" style="left:478.0px;top:316.5px;width:5.0px;height:4.0px;background:transparent;border:0.8px solid #555"></div>
<div class="a" style="left:490.5px;top:316.5px;width:5.0px;height:4.0px;background:transparent;border:0.8px solid #666"></div>
<div class="a" style="left:502.5px;top:316.5px;width:5.0px;height:4.0px;background:transparent;border:0.8px solid #666"></div>
<div class="a rb" style="left:515.5px;top:314.3px;color:#666;font-size:5px;">→</div>
<div class="a rb" style="left:526.5px;top:314.3px;color:#555;font-size:5px;">–</div>
<div class="a" style="left:531.0px;top:318.5px;width:39.0px;height:0.5px;background:#888;"></div>
<div class="a" style="left:545.8px;top:316.0px;width:1.4px;height:5.5px;background:#555;"></div>
<div class="a rb" style="left:570.5px;top:314.3px;color:#555;font-size:5.5px;">+</div>
<div class="a rb" style="left:579.5px;top:314.3px;color:#555;font-size:4.8px;">61%</div>
<div class="a" style="left:591.5px;top:316.0px;width:5.5px;height:5.0px;background:transparent;border:0.8px solid #777"></div>
 <div class="a" style="left:192px;top:61px;width:303px;height:227px;overflow:hidden;background:linear-gradient(90deg,#1b4ba6 0%,#1a55b8 35%,#1463d2 70%,#0f6be4 100%)">
 <div class="a" style="left:0;top:0;width:303px;height:227px;background:linear-gradient(180deg,rgba(10,30,90,0.15),rgba(0,0,0,0) 30%,rgba(0,0,0,0) 80%,rgba(10,30,90,0.18))"></div>
 <div class="a" style="left:166px;top:0;width:63px;height:4px;background:#f3d23c;clip-path:polygon(0 0,100% 0,96% 100%,1% 100%)"></div>
 <div class="a" style="left:226px;top:0;width:77px;height:10px;background:#0b3a8e;clip-path:polygon(0 0,100% 0,100% 100%,4% 100%)"></div>
 <div class="a" style="left:0;top:216px;width:140px;height:3px;background:linear-gradient(90deg,rgba(8,40,110,0.5),rgba(8,40,110,0))"></div>
 <div class="a" style="left:0;top:219px;width:58px;height:8px;background:#f3d23c"></div>
 <div class="a" style="left:56px;top:219px;width:41px;height:4px;background:#f3d23c;clip-path:polygon(0 0,100% 0,95% 100%,0 100%)"></div>
 <div class="a" style="left:58px;top:223px;width:100px;height:4px;background:linear-gradient(90deg,#0a2f80 60%,rgba(10,47,128,0))"></div>
 <div class="a" style="left:20px;top:5px"><svg width="70" height="66" viewBox="0 0 70 66"><rect x="12.400000000000006" y="9.099999999999994" width="45" height="44.4" fill="none" stroke="#b4cef2" stroke-width="1.1"/><ellipse cx="27.2" cy="55.4" rx="0.9" ry="2.3" transform="rotate(-41 27.2 55.4)" fill="#b4cef2" opacity="0.85"/><ellipse cx="26.4" cy="58.4" rx="0.9" ry="2.3" transform="rotate(-111 26.4 58.4)" fill="#b4cef2" opacity="0.85"/><ellipse cx="22.3" cy="53.6" rx="0.9" ry="2.3" transform="rotate(-29 22.3 53.6)" fill="#b4cef2" opacity="0.85"/><ellipse cx="20.9" cy="56.4" rx="0.9" ry="2.3" transform="rotate(-99 20.9 56.4)" fill="#b4cef2" opacity="0.85"/><ellipse cx="18.0" cy="50.9" rx="0.9" ry="2.3" transform="rotate(-18 18.0 50.9)" fill="#b4cef2" opacity="0.85"/><ellipse cx="16.0" cy="53.4" rx="0.9" ry="2.3" transform="rotate(-88 16.0 53.4)" fill="#b4cef2" opacity="0.85"/><ellipse cx="14.2" cy="47.5" rx="0.9" ry="2.3" transform="rotate(-7 14.2 47.5)" fill="#b4cef2" opacity="0.85"/><ellipse cx="11.8" cy="49.5" rx="0.9" ry="2.3" transform="rotate(-77 11.8 49.5)" fill="#b4cef2" opacity="0.85"/><ellipse cx="11.2" cy="43.4" rx="0.9" ry="2.3" transform="rotate(5 11.2 43.4)" fill="#b4cef2" opacity="0.85"/><ellipse cx="8.4" cy="44.9" rx="0.9" ry="2.3" transform="rotate(-65 8.4 44.9)" fill="#b4cef2" opacity="0.85"/><ellipse cx="9.2" cy="38.8" rx="0.9" ry="2.3" transform="rotate(17 9.2 38.8)" fill="#b4cef2" opacity="0.85"/><ellipse cx="6.1" cy="39.7" rx="0.9" ry="2.3" transform="rotate(-53 6.1 39.7)" fill="#b4cef2" opacity="0.85"/><ellipse cx="8.1" cy="33.9" rx="0.9" ry="2.3" transform="rotate(29 8.1 33.9)" fill="#b4cef2" opacity="0.85"/><ellipse cx="5.0" cy="34.2" rx="0.9" ry="2.3" transform="rotate(-41 5.0 34.2)" fill="#b4cef2" opacity="0.85"/><ellipse cx="8.1" cy="28.9" rx="0.9" ry="2.3" transform="rotate(41 8.1 28.9)" fill="#b4cef2" opacity="0.85"/><ellipse cx="4.9" cy="28.6" rx="0.9" ry="2.3" transform="rotate(-29 4.9 28.6)" fill="#b4cef2" opacity="0.85"/><ellipse cx="9.1" cy="24.0" rx="0.9" ry="2.3" transform="rotate(53 9.1 24.0)" fill="#b4cef2" opacity="0.85"/><ellipse cx="6.1" cy="23.1" rx="0.9" ry="2.3" transform="rotate(-17 6.1 23.1)" fill="#b4cef2" opacity="0.85"/><ellipse cx="11.1" cy="19.4" rx="0.9" ry="2.3" transform="rotate(64 11.1 19.4)" fill="#b4cef2" opacity="0.85"/><ellipse cx="8.3" cy="17.9" rx="0.9" ry="2.3" transform="rotate(-6 8.3 17.9)" fill="#b4cef2" opacity="0.85"/><ellipse cx="14.1" cy="15.3" rx="0.9" ry="2.3" transform="rotate(76 14.1 15.3)" fill="#b4cef2" opacity="0.85"/><ellipse cx="11.6" cy="13.2" rx="0.9" ry="2.3" transform="rotate(6 11.6 13.2)" fill="#b4cef2" opacity="0.85"/><ellipse cx="17.8" cy="11.8" rx="0.9" ry="2.3" transform="rotate(88 17.8 11.8)" fill="#b4cef2" opacity="0.85"/><ellipse cx="15.8" cy="9.3" rx="0.9" ry="2.3" transform="rotate(18 15.8 9.3)" fill="#b4cef2" opacity="0.85"/><ellipse cx="22.1" cy="9.1" rx="0.9" ry="2.3" transform="rotate(99 22.1 9.1)" fill="#b4cef2" opacity="0.85"/><ellipse cx="20.7" cy="6.3" rx="0.9" ry="2.3" transform="rotate(29 20.7 6.3)" fill="#b4cef2" opacity="0.85"/><ellipse cx="27.0" cy="7.3" rx="0.9" ry="2.3" transform="rotate(110 27.0 7.3)" fill="#b4cef2" opacity="0.85"/><ellipse cx="26.1" cy="4.2" rx="0.9" ry="2.3" transform="rotate(40 26.1 4.2)" fill="#b4cef2" opacity="0.85"/><ellipse cx="40.6" cy="55.4" rx="0.9" ry="2.3" transform="rotate(41 40.6 55.4)" fill="#b4cef2" opacity="0.85"/><ellipse cx="41.4" cy="58.4" rx="0.9" ry="2.3" transform="rotate(111 41.4 58.4)" fill="#b4cef2" opacity="0.85"/><ellipse cx="45.5" cy="53.6" rx="0.9" ry="2.3" transform="rotate(29 45.5 53.6)" fill="#b4cef2" opacity="0.85"/><ellipse cx="46.9" cy="56.4" rx="0.9" ry="2.3" transform="rotate(99 46.9 56.4)" fill="#b4cef2" opacity="0.85"/><ellipse cx="49.8" cy="50.9" rx="0.9" ry="2.3" transform="rotate(18 49.8 50.9)" fill="#b4cef2" opacity="0.85"/><ellipse cx="51.8" cy="53.4" rx="0.9" ry="2.3" transform="rotate(88 51.8 53.4)" fill="#b4cef2" opacity="0.85"/><ellipse cx="53.6" cy="47.5" rx="0.9" ry="2.3" transform="rotate(7 53.6 47.5)" fill="#b4cef2" opacity="0.85"/><ellipse cx="56.0" cy="49.5" rx="0.9" ry="2.3" transform="rotate(77 56.0 49.5)" fill="#b4cef2" opacity="0.85"/><ellipse cx="56.6" cy="43.4" rx="0.9" ry="2.3" transform="rotate(-5 56.6 43.4)" fill="#b4cef2" opacity="0.85"/><ellipse cx="59.4" cy="44.9" rx="0.9" ry="2.3" transform="rotate(65 59.4 44.9)" fill="#b4cef2" opacity="0.85"/><ellipse cx="58.6" cy="38.8" rx="0.9" ry="2.3" transform="rotate(-17 58.6 38.8)" fill="#b4cef2" opacity="0.85"/><ellipse cx="61.7" cy="39.7" rx="0.9" ry="2.3" transform="rotate(53 61.7 39.7)" fill="#b4cef2" opacity="0.85"/><ellipse cx="59.7" cy="33.9" rx="0.9" ry="2.3" transform="rotate(-29 59.7 33.9)" fill="#b4cef2" opacity="0.85"/><ellipse cx="62.8" cy="34.2" rx="0.9" ry="2.3" transform="rotate(41 62.8 34.2)" fill="#b4cef2" opacity="0.85"/><ellipse cx="59.7" cy="28.9" rx="0.9" ry="2.3" transform="rotate(-41 59.7 28.9)" fill="#b4cef2" opacity="0.85"/><ellipse cx="62.9" cy="28.6" rx="0.9" ry="2.3" transform="rotate(29 62.9 28.6)" fill="#b4cef2" opacity="0.85"/><ellipse cx="58.7" cy="24.0" rx="0.9" ry="2.3" transform="rotate(-53 58.7 24.0)" fill="#b4cef2" opacity="0.85"/><ellipse cx="61.7" cy="23.1" rx="0.9" ry="2.3" transform="rotate(17 61.7 23.1)" fill="#b4cef2" opacity="0.85"/><ellipse cx="56.7" cy="19.4" rx="0.9" ry="2.3" transform="rotate(-64 56.7 19.4)" fill="#b4cef2" opacity="0.85"/><ellipse cx="59.5" cy="17.9" rx="0.9" ry="2.3" transform="rotate(6 59.5 17.9)" fill="#b4cef2" opacity="0.85"/><ellipse cx="53.7" cy="15.3" rx="0.9" ry="2.3" transform="rotate(-76 53.7 15.3)" fill="#b4cef2" opacity="0.85"/><ellipse cx="56.2" cy="13.2" rx="0.9" ry="2.3" transform="rotate(-6 56.2 13.2)" fill="#b4cef2" opacity="0.85"/><ellipse cx="50.0" cy="11.8" rx="0.9" ry="2.3" transform="rotate(-88 50.0 11.8)" fill="#b4cef2" opacity="0.85"/><ellipse cx="52.0" cy="9.3" rx="0.9" ry="2.3" transform="rotate(-18 52.0 9.3)" fill="#b4cef2" opacity="0.85"/><ellipse cx="45.7" cy="9.1" rx="0.9" ry="2.3" transform="rotate(-99 45.7 9.1)" fill="#b4cef2" opacity="0.85"/><ellipse cx="47.1" cy="6.3" rx="0.9" ry="2.3" transform="rotate(-29 47.1 6.3)" fill="#b4cef2" opacity="0.85"/><ellipse cx="40.8" cy="7.3" rx="0.9" ry="2.3" transform="rotate(-110 40.8 7.3)" fill="#b4cef2" opacity="0.85"/><ellipse cx="41.7" cy="4.2" rx="0.9" ry="2.3" transform="rotate(-40 41.7 4.2)" fill="#b4cef2" opacity="0.85"/><circle cx="49.6" cy="36.4" r="3.6" fill="none" stroke="#b4cef2" stroke-width="1.1" stroke-dasharray="16 6" transform="rotate(0 49.6 36.4)"/><circle cx="43.6" cy="44.6" r="3.6" fill="none" stroke="#b4cef2" stroke-width="1.1" stroke-dasharray="16 6" transform="rotate(36 43.6 44.6)"/><circle cx="33.9" cy="47.8" r="3.6" fill="none" stroke="#b4cef2" stroke-width="1.1" stroke-dasharray="16 6" transform="rotate(72 33.9 47.8)"/><circle cx="24.2" cy="44.6" r="3.6" fill="none" stroke="#b4cef2" stroke-width="1.1" stroke-dasharray="16 6" transform="rotate(108 24.2 44.6)"/><circle cx="18.2" cy="36.4" r="3.6" fill="none" stroke="#b4cef2" stroke-width="1.1" stroke-dasharray="16 6" transform="rotate(144 18.2 36.4)"/><circle cx="18.2" cy="26.2" r="3.6" fill="none" stroke="#b4cef2" stroke-width="1.1" stroke-dasharray="16 6" transform="rotate(180 18.2 26.2)"/><circle cx="24.2" cy="18.0" r="3.6" fill="none" stroke="#b4cef2" stroke-width="1.1" stroke-dasharray="16 6" transform="rotate(216 24.2 18.0)"/><circle cx="33.9" cy="14.8" r="3.6" fill="none" stroke="#b4cef2" stroke-width="1.1" stroke-dasharray="16 6" transform="rotate(252 33.9 14.8)"/><circle cx="43.6" cy="18.0" r="3.6" fill="none" stroke="#b4cef2" stroke-width="1.1" stroke-dasharray="16 6" transform="rotate(288 43.6 18.0)"/><circle cx="49.6" cy="26.2" r="3.6" fill="none" stroke="#b4cef2" stroke-width="1.1" stroke-dasharray="16 6" transform="rotate(324 49.6 26.2)"/><circle cx="33.9" cy="31.3" r="12.2" fill="none" stroke="#b4cef2" stroke-width="0.9"/><path d="M25.9 24.3Q33.9 21.3 41.9 24.3V33.3Q41.9 40.3 33.9 41.3Q25.9 40.3 25.9 33.3Z" fill="#7fa6dc" stroke="#b4cef2" stroke-width="0.8"/><path d="M29.9 37.3V28.3L33.9 25.3L37.9 28.3V37.3M31.9 37.3V30.3M35.9 37.3V30.3" fill="none" stroke="#3a6ab8" stroke-width="0.8"/></svg></div>
 <div class="a" style="left:90px;top:25px;font-size:10.1px;line-height:12px;font-weight:bold;color:#fff;white-space:nowrap">Луганський національний університет</div>
 <div class="a" style="left:90px;top:36px;font-size:9.9px;line-height:12px;color:#f4f8ff;white-space:nowrap">імені Тараса Шевченка</div>
 <div class="a" style="left:24.5px;top:67px;width:254px;height:116px;border-radius:13px;background:linear-gradient(100deg,#1a489f 0%,#1752b2 45%,#1360ca 100%);border:1.2px solid #0d2f7a;box-shadow:inset 1px 1px 2px rgba(120,170,240,0.35),1px 2px 3px rgba(0,20,70,0.35)"></div>
 <div class="a ttl" style="top:76px">АНАЛІЗ РЕЗУЛЬТАТІВ</div>
 <div class="a ttl" style="top:95px">ОПИТУВАННЯ</div>
 <div class="a ttl" style="top:115px">ЗДОБУВАЧІВ ОСВІТИ,</div>
 <div class="a ttl" style="top:135px">які вступили на навчання</div>
 <div class="a ttl" style="top:152.5px">у 2022 і у 2023 рр.</div>
 <div class="a" style="left:127px;top:189.5px;font-size:8.4px;line-height:10px;font-weight:bold;color:#fff;white-space:nowrap">Кількість здобувачів освіти&nbsp; I курсу:</div>
 <div class="a" style="left:168.5px;top:200px;font-size:8.1px;line-height:10px;color:#fff;white-space:nowrap">2022 р. – 513 осіб,</div>
 <div class="a" style="left:168.5px;top:210px;font-size:8.4px;line-height:10px;color:#fff;white-space:nowrap">2023 р. – 723 особи</div>
 <div class="a" style="left:28px;top:203px"><svg width="6" height="9" viewBox="0 0 6 9"><path d="M0.5 0.5V7.5L2.2 6L3.5 8.5L4.5 8L3.3 5.5H5.5Z" fill="#fff" stroke="#222" stroke-width="0.5"/></svg></div>
</div>
</div>
<div class="tile" style="left:619px;top:159px;width:86px;height:72px;background:#b4a596">
 <div class="a" style="left:0;top:0;width:86px;height:72px;background:linear-gradient(90deg,#9d8e80,#bcae9f 40%,#c4b6a6 70%,#b2a191)"></div>
 <div class="a" style="left:72px;top:0;width:14px;height:12px;background:linear-gradient(200deg,#4a3c30,rgba(120,100,80,0))"></div>
 <div class="a vid" style="left:29px;top:9px;width:38px;height:48px;border-radius:45% 45% 30% 30%;background:#d4ccb4"></div>
 <div class="a vid" style="left:34px;top:16px;width:26px;height:32px;border-radius:45% 45% 48% 48%;background:#c49a8e"></div>
 <div class="a" style="left:42px;top:38px;width:9px;height:4px;border-radius:50%;background:#7a3a36"></div>
 <div class="a" style="left:38px;top:29px;width:5px;height:2px;background:#6a5050;border-radius:50%"></div>
 <div class="a" style="left:50px;top:29px;width:5px;height:2px;background:#6a5050;border-radius:50%"></div>
 <div class="a vid" style="left:5px;top:47px;width:81px;height:30px;border-radius:40% 40% 0 0;background:#dde2ec"></div>
 <div class="a vid" style="left:35px;top:44px;width:24px;height:9px;border-radius:0 0 50% 50%;background:#eef0f6;box-shadow:0 1px 0 #4a3a50"></div>
 <div class="a" style="left:0;top:0;width:86px;height:72px;border:2px solid #8ab4f8;border-radius:6px"></div>
 <div class="a" style="left:63.5px;top:7.5px;width:15px;height:15px;border-radius:50%;background:#1a73e8"></div>
 <div class="a" style="left:67.3px;top:11.8px;width:2px;height:6.5px;background:#fff;border-radius:1px"></div>
 <div class="a" style="left:70.5px;top:10.5px;width:2px;height:9px;background:#fff;border-radius:1px"></div>
 <div class="a" style="left:73.7px;top:11.8px;width:2px;height:6.5px;background:#fff;border-radius:1px"></div>
</div>
<div class="a nm" style="left:629px;top:212.2px">Лариса Кочура</div>
<div class="tile" style="left:712px;top:159px;width:86px;height:71px;background:#b8b8b4">
 <div class="a" style="left:0;top:0;width:86px;height:71px;background:linear-gradient(90deg,#d8d8d6 0%,#c0c2c0 30%,#b4b6b4 55%,#c8cac6 75%,#a89070 88%,#9a8260 100%)"></div>
 <div class="a" style="left:0;top:0;width:12px;height:71px;background:linear-gradient(90deg,#f0f0f0,rgba(220,220,220,0))"></div>
 <div class="a" style="left:10px;top:0;width:76px;height:6px;background:linear-gradient(#5a4630,#8a7050)"></div>
 <div class="a" style="left:74px;top:5px;width:6px;height:66px;background:#b09468"></div>
 <div class="a" style="left:80px;top:8px;width:6px;height:63px;background:#7a8a50"></div>
 <div class="a vid" style="left:60px;top:48px;width:14px;height:10px;border-radius:50%;background:#5a8a40"></div>
 <div class="a vid" style="left:25px;top:14px;width:30px;height:26px;border-radius:45% 45% 30% 30%;background:#3a2a20"></div>
 <div class="a vid" style="left:27px;top:21px;width:26px;height:35px;border-radius:40% 40% 45% 45%;background:#b08674"></div>
 <div class="a" style="left:32px;top:33px;width:5px;height:2px;background:#4a3028;border-radius:50%"></div>
 <div class="a" style="left:43px;top:33px;width:5px;height:2px;background:#4a3028;border-radius:50%"></div>
 <div class="a vid" style="left:2px;top:50px;width:80px;height:28px;border-radius:45% 45% 0 0;background:#7c7c6c"></div>
 <div class="a" style="left:20px;top:58px;width:50px;height:14px;background:repeating-linear-gradient(60deg,rgba(60,60,40,0.12) 0 3px,rgba(200,200,180,0.1) 3px 6px);filter:blur(0.6px)"></div>
</div>
<div class="a" style="left:776px;top:167.5px;width:10px;height:10px;"><svg width="10" height="10" viewBox="0 0 10 10"><rect x="3.3" y="0.8" width="3.6" height="5.4" rx="1.8" fill="#f6f7f8"/><path d="M2.1 4.6Q2.1 7.6 5 7.6Q7.9 7.6 7.9 4.6M5 7.6V9.6" fill="none" stroke="#f6f7f8" stroke-width="1.2"/><path d="M1.2 1L8.8 9.2" stroke="#f6f7f8" stroke-width="1.4"/><path d="M2.3 0.4L9.6 8.3" stroke="#2e3134" stroke-width="0.7"/></svg></div>
<div class="a nm" style="left:721px;top:212.2px">Yurii Zhuchok</div>
<div class="tile" style="left:804px;top:159px;width:86px;height:72px">
 <div class="a" style="left:29.5px;top:21.5px;width:27px;height:27px;border-radius:50%;overflow:hidden;background:linear-gradient(180deg,#c8a050 0%,#e8d088 35%,#c09040 60%,#a08040 100%)">
  <div class="a" style="left:8px;top:6px;width:10px;height:14px;background:#b03030;border-radius:40%"></div>
  <div class="a" style="left:12px;top:16px;width:2px;height:11px;background:#2a3a60"></div>
  <div class="a" style="left:0;top:12px;width:27px;height:2px;background:rgba(80,50,20,0.5)"></div>
 </div>
</div>
<div class="a" style="left:870px;top:168px;width:10px;height:10px;"><svg width="10" height="10" viewBox="0 0 10 10"><rect x="3.3" y="0.8" width="3.6" height="5.4" rx="1.8" fill="#f6f7f8"/><path d="M2.1 4.6Q2.1 7.6 5 7.6Q7.9 7.6 7.9 4.6M5 7.6V9.6" fill="none" stroke="#f6f7f8" stroke-width="1.2"/><path d="M1.2 1L8.8 9.2" stroke="#f6f7f8" stroke-width="1.4"/><path d="M2.3 0.4L9.6 8.3" stroke="#2e3134" stroke-width="0.7"/></svg></div>
<div class="a nm" style="left:813.5px;top:212.8px">Валентина Вовк</div>
<div class="tile" style="left:619px;top:238px;width:86px;height:70px">
 <div class="a" style="left:30px;top:22px;width:26px;height:26px;border-radius:50%;overflow:hidden;background:#e8e4e0">
  <div class="a vid" style="left:4px;top:2px;width:12px;height:26px;border-radius:50% 30% 0 0;background:#2a2020"></div>
  <div class="a vid" style="left:11px;top:6px;width:12px;height:16px;border-radius:50%;background:#e6cfc6"></div>
  <div class="a" style="left:7px;top:4px;width:8px;height:10px;border-radius:50%;background:#3a2a24"></div>
 </div>
</div>
<div class="a" style="left:685px;top:246.7px;width:10px;height:10px;"><svg width="10" height="10" viewBox="0 0 10 10"><rect x="3.3" y="0.8" width="3.6" height="5.4" rx="1.8" fill="#f6f7f8"/><path d="M2.1 4.6Q2.1 7.6 5 7.6Q7.9 7.6 7.9 4.6M5 7.6V9.6" fill="none" stroke="#f6f7f8" stroke-width="1.2"/><path d="M1.2 1L8.8 9.2" stroke="#f6f7f8" stroke-width="1.4"/><path d="M2.3 0.4L9.6 8.3" stroke="#2e3134" stroke-width="0.7"/></svg></div>
<div class="a nm" style="left:629px;top:290.2px">Таня Мартинен...</div>
<div class="tile" style="left:712px;top:238px;width:86px;height:70px">
 <div class="a" style="left:29px;top:22px;width:26px;height:26px;border-radius:50%;background:#9462d2;color:#f3ecfa;font-size:14px;line-height:24px;text-align:center">a</div>
</div>
<div class="a" style="left:778.5px;top:247px;width:10px;height:10px;"><svg width="10" height="10" viewBox="0 0 10 10"><rect x="3.3" y="0.8" width="3.6" height="5.4" rx="1.8" fill="#f6f7f8"/><path d="M2.1 4.6Q2.1 7.6 5 7.6Q7.9 7.6 7.9 4.6M5 7.6V9.6" fill="none" stroke="#f6f7f8" stroke-width="1.2"/><path d="M1.2 1L8.8 9.2" stroke="#f6f7f8" stroke-width="1.4"/><path d="M2.3 0.4L9.6 8.3" stroke="#2e3134" stroke-width="0.7"/></svg></div>
<div class="a nm" style="left:721px;top:290.2px">anna serik</div>
<div class="tile" style="left:804px;top:238px;width:86px;height:70px;background:#a8a8a6">
 <div class="a" style="left:0;top:0;width:86px;height:70px;background:linear-gradient(90deg,#d4d4d2 0%,#c2c2c0 25%,#a8a8a6 45%,#9a9896 62%,#8e8a84 80%,#7a6040 86%,#8a6a3c 100%)"></div>
 <div class="a vid" style="left:0px;top:28px;width:22px;height:42px;background:#ececea"></div>
 <div class="a vid" style="left:46px;top:18px;width:30px;height:22px;border-radius:50% 50% 20% 20%;background:#2e2a2a"></div>
 <div class="a vid" style="left:49px;top:24px;width:26px;height:32px;border-radius:40% 40% 45% 45%;background:#9a7668"></div>
 <div class="a vid" style="left:46px;top:45px;width:16px;height:12px;border-radius:45%;background:#d8c8c0"></div>
 <div class="a vid" style="left:22px;top:54px;width:62px;height:20px;border-radius:40% 40% 0 0;background:#2e3440"></div>
</div>
<div class="a" style="left:869.5px;top:246.7px;width:10px;height:10px;"><svg width="10" height="10" viewBox="0 0 10 10"><rect x="3.3" y="0.8" width="3.6" height="5.4" rx="1.8" fill="#f6f7f8"/><path d="M2.1 4.6Q2.1 7.6 5 7.6Q7.9 7.6 7.9 4.6M5 7.6V9.6" fill="none" stroke="#f6f7f8" stroke-width="1.2"/><path d="M1.2 1L8.8 9.2" stroke="#f6f7f8" stroke-width="1.4"/><path d="M2.3 0.4L9.6 8.3" stroke="#2e3134" stroke-width="0.7"/></svg></div>
<div class="a nm" style="left:814px;top:290.2px">Anatolii Zhuchok</div>
<div class="tile" style="left:619px;top:316px;width:86px;height:71px">
 <div class="a" style="left:30.5px;top:22px;width:26px;height:26px;border-radius:50%;background:#dd4317;color:#fbe6dc;font-size:14px;line-height:26px;text-align:center">В</div>
</div>
<div class="a" style="left:685px;top:325px;width:10px;height:10px;"><svg width="10" height="10" viewBox="0 0 10 10"><rect x="3.3" y="0.8" width="3.6" height="5.4" rx="1.8" fill="#f6f7f8"/><path d="M2.1 4.6Q2.1 7.6 5 7.6Q7.9 7.6 7.9 4.6M5 7.6V9.6" fill="none" stroke="#f6f7f8" stroke-width="1.2"/><path d="M1.2 1L8.8 9.2" stroke="#f6f7f8" stroke-width="1.4"/><path d="M2.3 0.4L9.6 8.3" stroke="#2e3134" stroke-width="0.7"/></svg></div>
<div class="a nm" style="left:629px;top:368.7px">Володимир Д...</div>
<div class="tile" style="left:712px;top:316px;width:86px;height:71px">
 <div class="a" style="left:27.5px;top:20.3px;width:14px;height:14px;border-radius:50%;background:#7c3a2c;color:#f4e0d8;font-size:9px;line-height:14px;text-align:center;font-weight:bold">C</div>
 <div class="a" style="left:44px;top:20.3px;width:14px;height:14px;border-radius:50%;background:#3f5b69;color:#e6f0f4;font-size:9px;line-height:14px;text-align:center;font-weight:bold">V</div>
 <div class="a" style="left:0;top:42px;width:86px;text-align:center;font-size:8.6px;font-weight:normal;line-height:12px;color:#f1f3f4;-webkit-text-stroke:0.2px #f1f3f4">Ещё 20 чел.</div>
</div>
<div class="tile" style="left:804px;top:316px;width:86px;height:71px">
 <div class="a" style="left:0;top:10px;width:86px;height:49px;overflow:hidden;background:linear-gradient(90deg,#d6d6d4,#ececea 40%,#f2f2f0 70%,#e4e4e2)">
  <div class="a" style="left:28px;top:1px;width:15px;height:9px;background:#c8c8c8;border:1.5px solid #707070"></div>
  <div class="a vid" style="left:0;top:24px;width:16px;height:26px;border-radius:40% 40% 0 0;background:#e2c23a"></div>
  <div class="a vid" style="left:-4px;top:12px;width:10px;height:14px;border-radius:50%;background:#b09080"></div>
  <div class="a vid" style="left:32px;top:13px;width:24px;height:24px;border-radius:50%;background:#b89868"></div>
  <div class="a vid" style="left:35px;top:18px;width:19px;height:20px;border-radius:45%;background:#c9a090"></div>
  <div class="a vid" style="left:22px;top:34px;width:46px;height:20px;border-radius:45% 45% 0 0;background:#3c3e46"></div>
  <div class="a" style="left:64px;top:0px;width:14px;height:13px;border-radius:50%;background:rgba(140,140,140,0.55)"></div>
 </div>
</div>
<div class="a" style="left:870px;top:326px;width:10px;height:10px;"><svg width="10" height="10" viewBox="0 0 10 10"><rect x="3.3" y="0.8" width="3.6" height="5.4" rx="1.8" fill="#f6f7f8"/><path d="M2.1 4.6Q2.1 7.6 5 7.6Q7.9 7.6 7.9 4.6M5 7.6V9.6" fill="none" stroke="#f6f7f8" stroke-width="1.2"/><path d="M1.2 1L8.8 9.2" stroke="#f6f7f8" stroke-width="1.4"/><path d="M2.3 0.4L9.6 8.3" stroke="#2e3134" stroke-width="0.7"/></svg></div>
<div class="a nm" style="left:815px;top:370px">Таня Дем'янчук</div>
<div class="a" style="left:14.5px;top:452.5px;font-size:8.6px;font-weight:bold;line-height:12px;color:#e8eaed;letter-spacing:-0.3px">17:16</div>
<div class="a" style="left:42px;top:453px;width:1px;height:11px;background:#5f6368"></div>
<div class="a" style="left:50px;top:452.5px;font-size:9.5px;font-weight:bold;line-height:12px;color:#e8eaed;letter-spacing:-0.1px">eka-uekh-dsm</div>
<div class="a" style="left:326.9px;top:446.8px;width:23.5px;height:23.5px;border-radius:12px;background:#ea4335"><svg class="a" style="left:6.25px;top:6.25px" width="11" height="11" viewBox="0 0 11 11"><rect x="4" y="1" width="3" height="5.5" rx="1.5" fill="#fff"/><path d="M2.5 5Q2.5 8.2 5.5 8.2Q8.5 8.2 8.5 5M5.5 8.2V10.2" fill="none" stroke="#fff" stroke-width="1"/><path d="M1.5 1L9.5 10" stroke="#fff" stroke-width="1.1"/><path d="M2.3 0.6L10.2 9.5" stroke="#ea4335" stroke-width="0.7"/></svg></div>
<div class="a" style="left:357.2px;top:446.8px;width:23.5px;height:23.5px;border-radius:12px;background:#3c4043"><svg class="a" style="left:6.25px;top:7.25px" width="11" height="9" viewBox="0 0 11 9"><rect x="0.7" y="1" width="6.6" height="7" rx="0.8" fill="none" stroke="#e8eaed" stroke-width="1.3"/><path d="M7.3 3.8L10.3 1.8V7.2L7.3 5.2Z" fill="#e8eaed"/></svg></div>
<div class="a" style="left:387.8px;top:446.8px;width:23.5px;height:23.5px;border-radius:12px;background:#3c4043"><svg class="a" style="left:6.25px;top:7.25px" width="11" height="9" viewBox="0 0 11 9"><rect x="0.7" y="0.7" width="9.6" height="7.6" rx="0.8" fill="none" stroke="#e8eaed" stroke-width="1.2"/><path d="M4.6 3.3H2.8V5.7H4.6M8.2 3.3H6.4V5.7H8.2" fill="none" stroke="#e8eaed" stroke-width="0.9"/></svg></div>
<div class="a" style="left:417.9px;top:446.8px;width:23.5px;height:23.5px;border-radius:12px;background:#3c4043"><svg class="a" style="left:5.25px;top:5.25px" width="13" height="13" viewBox="0 0 13 13"><circle cx="6.5" cy="6.5" r="5.4" fill="none" stroke="#e8eaed" stroke-width="1.5"/><circle cx="4.6" cy="5.1" r="0.95" fill="#e8eaed"/><circle cx="8.4" cy="5.1" r="0.95" fill="#e8eaed"/><path d="M3.7 7.3Q6.5 10.6 9.3 7.3Z" fill="#e8eaed"/></svg></div>
<div class="a" style="left:448.2px;top:446.8px;width:23.5px;height:23.5px;border-radius:12px;background:#3c4043"><svg class="a" style="left:4.75px;top:6.75px" width="14" height="10" viewBox="0 0 14 10"><rect x="0.8" y="0.8" width="12.4" height="8.4" fill="none" stroke="#e8eaed" stroke-width="1.6"/><path d="M7 2.6L9.3 5L7 7.4L4.7 5Z" fill="#e8eaed"/></svg></div>
<div class="a" style="left:479.2px;top:446.8px;width:23.5px;height:23.5px;border-radius:12px;background:#3c4043"><svg class="a" style="left:6.25px;top:5.5px" width="11" height="13" viewBox="0 0 11 13"><path d="M2.2 7V3.2A0.8 0.8 0 0 1 3.8 3.2V6M3.8 6V1.8A0.8 0.8 0 0 1 5.4 1.8V6M5.4 6V1.5A0.8 0.8 0 0 1 7 1.5V6M7 6V2.8A0.8 0.8 0 0 1 8.6 2.8V8Q8.6 12 5.2 12Q3 12 1.8 9.8L0.8 7.5A0.8 0.8 0 0 1 2.2 7" fill="none" stroke="#e8eaed" stroke-width="1.45" stroke-linejoin="round"/></svg></div>
<div class="a" style="left:509.2px;top:446.8px;width:23.5px;height:23.5px;border-radius:12px;background:#3c4043"><div class="a" style="left:10.35px;top:5.6px;width:2.8px;height:2.8px;border-radius:50%;background:#e8eaed;box-shadow:0 4.6px 0 #e8eaed,0 9.2px 0 #e8eaed"></div></div>
<div class="a" style="left:540.0px;top:446.8px;width:33px;height:23.5px;border-radius:12px;background:#ea4335"><svg class="a" style="left:9px;top:8.5px" width="15" height="7" viewBox="0 0 15 7"><path d="M1 4.6Q7.5 -1.5 14 4.6L12.3 6.2L9.8 4.6V3Q7.5 2.2 5.2 3V4.6L2.7 6.2Z" fill="#fff"/></svg></div>
<svg class="a" style="left:787.5px;top:452px" width="13" height="13" viewBox="0 0 13 13"><circle cx="6.5" cy="6.5" r="5.4" fill="none" stroke="#e8eaed" stroke-width="1.6"/><rect x="5.6" y="5.4" width="1.8" height="4.2" fill="#e8eaed"/><circle cx="6.5" cy="3.7" r="1" fill="#e8eaed"/></svg>
<svg class="a" style="left:815.5px;top:452.5px" width="14" height="12" viewBox="0 0 14 12"><circle cx="5" cy="3.3" r="2.3" fill="none" stroke="#eceef0" stroke-width="1.7"/><path d="M0.9 10.9V9.8Q0.9 7.2 5 7.2Q9.1 7.2 9.1 9.8V10.9Z" fill="none" stroke="#eceef0" stroke-width="1.7" stroke-linejoin="round"/><path d="M9.3 1.1A2.3 2.3 0 0 1 9.3 5.5" fill="none" stroke="#eceef0" stroke-width="1.7"/><path d="M10.8 7.4Q13.2 8 13.2 9.8V11.2" fill="none" stroke="#eceef0" stroke-width="1.7"/></svg>
<div class="a" style="left:822.5px;top:439px;width:16.5px;height:12px;border-radius:6px;background:#5f6368;color:#e8eaed;font-size:7.5px;font-weight:bold;line-height:12px;text-align:center">29</div>
<svg class="a" style="left:844px;top:452.5px" width="12" height="12" viewBox="0 0 12 12"><path d="M1.2 1.2H10.8V8.6H3.2L1.2 10.8Z" fill="none" stroke="#e8eaed" stroke-width="1.6" stroke-linejoin="round"/><path d="M3.2 3.6H8.8M3.2 5.6H8.8" stroke="#e8eaed" stroke-width="1.1"/></svg>
<div class="a" style="left:853.3px;top:448.3px;width:4px;height:4px;border-radius:50%;background:#8ab4f8"></div>
<svg class="a" style="left:872.5px;top:451.5px" width="13" height="14" viewBox="0 0 13 14"><path d="M6.5 1.5L8.9 5.5H4.1Z" fill="none" stroke="#eceef0" stroke-width="1.5" stroke-linejoin="round"/><rect x="1" y="8" width="4.4" height="4.4" rx="0.6" fill="none" stroke="#eceef0" stroke-width="1.6"/><circle cx="9.6" cy="10.2" r="2.3" fill="none" stroke="#eceef0" stroke-width="1.6"/></svg>
<div class="a" id="taskbar">
 <div class="a" style="left:0;top:0;width:900px;height:1px;background:#1a1a1c"></div>
 <svg class="a" style="left:9px;top:8px" width="10" height="10" viewBox="0 0 10 10"><path d="M0 1.4L4.2 0.8V4.7H0ZM4.8 0.7L10 0V4.7H4.8ZM0 5.3H4.2V9.2L0 8.6ZM4.8 5.3H10V10L4.8 9.3Z" fill="#f4f4f4"/></svg>
 <div class="a" style="left:37.5px;top:7px;width:13.5px;height:11px;background:linear-gradient(#e8b840 0 30%,#f6cc50 30%);border-radius:1px"></div>
 <div class="a" style="left:40px;top:12.5px;width:8.5px;height:4.5px;background:#3d8ee0"></div>
 <div class="a" style="left:32px;top:23px;width:24px;height:2px;background:#76b9ed"></div>
 <div class="a" style="left:66.5px;top:6.5px;width:12.5px;height:12.5px;border-radius:50%;background:#2aa0da"></div>
 <svg class="a" style="left:68.5px;top:9px" width="8" height="7" viewBox="0 0 8 7"><path d="M0.3 3L7.6 0.2L6.4 6.6L4 4.8L2.7 6L2.5 4.2L6.2 1.2L2 3.8Z" fill="#fff"/></svg>
 <div class="a" style="left:61px;top:23px;width:24px;height:2px;background:#76b9ed"></div>
 <div class="a" style="left:88px;top:0;width:29px;height:25px;background:#2e2e30"></div>
 <div class="a" style="left:96.5px;top:6px;width:12px;height:13px;border-radius:50%;border:2.8px solid #e8202a"></div>
 <div class="a" style="left:89px;top:23px;width:27px;height:2px;background:#8cc4f0"></div>
 <div class="a" style="left:124px;top:6px;width:14px;height:14px;border-radius:50%;background:conic-gradient(#f04a30 0 25%,#f8c020 0 40%,#40b040 0 60%,#2a80e0 0 80%,#e04070 0)"></div>
 <div class="a" style="left:127.5px;top:9.5px;width:7px;height:7px;border-radius:50%;background:#fff;box-shadow:inset 0 0 0 2px #2a6ab8"></div>
 <div class="a" style="left:153px;top:6.5px;width:14px;height:13px;background:#0a1a28;border:1.2px solid #31a8ff;color:#31a8ff;font-size:7px;font-weight:bold;line-height:10.5px;text-align:center">Ps</div>
 <div class="a" style="left:186px;top:6.5px;width:10px;height:13px;background:#f0f0f0;border-radius:1px"></div>
 <div class="a" style="left:183px;top:8px;width:9px;height:10px;background:#2b5aab;color:#fff;font-size:6.5px;font-weight:bold;line-height:10px;text-align:center">W</div>
 <div class="a" style="left:177px;top:23px;width:24px;height:2px;background:#8cc4f0"></div>
 <svg class="a" style="left:739px;top:10px" width="10" height="6" viewBox="0 0 10 6"><path d="M0.8 5.2L5 1L9.2 5.2" fill="none" stroke="#e8e8e8" stroke-width="1.1"/></svg>
 <svg class="a" style="left:754px;top:6px" width="8" height="13" viewBox="0 0 8 13"><path d="M1.5 0.5H6.5V8H7.5L4 12.5L0.5 8H1.5Z" fill="#f0f0f0"/></svg>
 <svg class="a" style="left:766px;top:9px" width="13" height="8" viewBox="0 0 13 8"><rect x="0.6" y="0.6" width="11" height="6.8" fill="none" stroke="#e8e8e8" stroke-width="1"/><rect x="1.8" y="1.8" width="6" height="4.4" fill="#f0f0f0"/><rect x="11.6" y="2.6" width="1.2" height="2.8" fill="#e8e8e8"/></svg>
 <svg class="a" style="left:781px;top:7px" width="12" height="11" viewBox="0 0 12 11"><path d="M0.5 10.5L11.5 0.5V10.5Z" fill="#4a4a4c"/><path d="M3 10.5L11.5 3V10.5Z" fill="#5a5a5c"/></svg>
 <svg class="a" style="left:795px;top:7px" width="12" height="11" viewBox="0 0 12 11"><path d="M0.6 3.5H3L6 0.8V10.2L3 7.5H0.6Z" fill="none" stroke="#e8e8e8" stroke-width="1"/><path d="M8 3Q9.5 5.5 8 8M9.8 1.6Q12 5.5 9.8 9.4" fill="none" stroke="#e8e8e8" stroke-width="1"/></svg>
 <div class="a" style="left:811px;top:7.5px;font-size:7.5px;line-height:10px;color:#f0f0f0;letter-spacing:-0.2px">УКР</div>
 <div class="a" style="left:831px;top:3px;width:36px;text-align:center;font-size:7.6px;line-height:10px;color:#f0f0f0;letter-spacing:-0.2px">17:16</div>
 <div class="a" style="left:826px;top:13.5px;width:46px;text-align:center;font-size:7.6px;line-height:10px;color:#f0f0f0;letter-spacing:-0.35px">18.10.2023</div>
 <svg class="a" style="left:875px;top:7px" width="12" height="12" viewBox="0 0 12 12"><path d="M0.6 0.6H11.4V8.6H7L4.5 11V8.6H0.6Z" fill="none" stroke="#e8e8e8" stroke-width="1" stroke-linejoin="round"/></svg>
 <div class="a" style="left:897px;top:2px;width:1px;height:23px;background:#6a6a6c"></div>
</div>
</body></html>
